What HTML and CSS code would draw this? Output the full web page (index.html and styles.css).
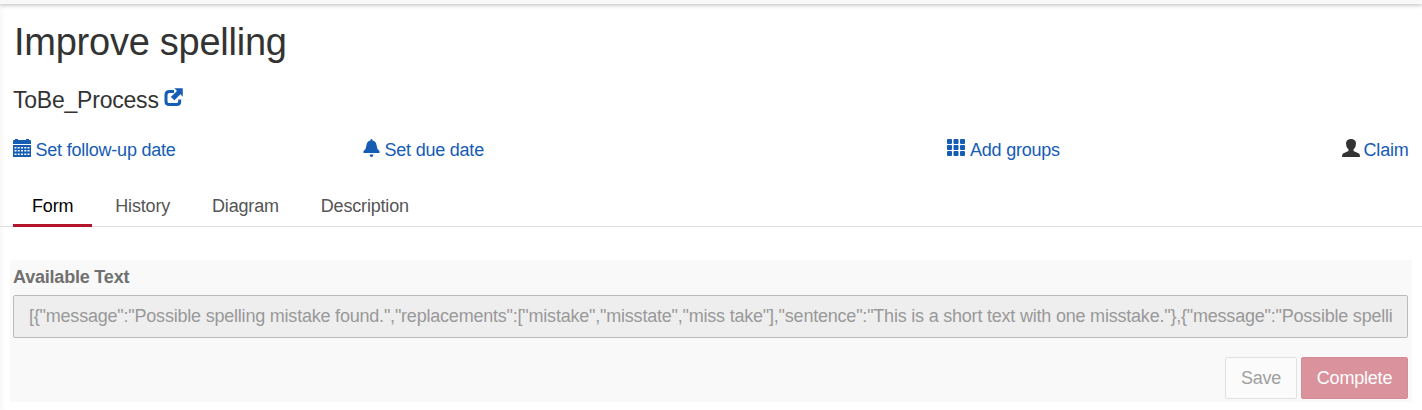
FILE: index.html
```html
<!DOCTYPE html>
<html lang="en">
<head>
<meta charset="utf-8">
<title>Improve spelling</title>
<link rel="stylesheet" href="styles.css">
</head>
<body>
<div class="topbar"></div>
<main class="task">
  <h1 class="title">Improve spelling</h1>
  <h2 class="process"><span>ToBe_Process</span><svg class="icon open-icon" width="20" height="20" viewBox="0 0 20 20"><path d="M10 3.500H5.500Q2 3.500 2 7V13.500Q2 16.500 5.500 16.500H12.500Q15.700 16.500 15.700 13.500V11.500" fill="none" stroke="#155cb5" stroke-width="3"/><path d="M10 0H19V9L16.300 6.500L10.500 12.500L6.500 9L12.700 3Z" fill="#155cb5" stroke="#fff" stroke-width=".5"/></svg></h2>
  <div class="meta">
    <a class="meta-item followup"><svg class="icon" width="18" height="18" viewBox="0 0 18 18"><path fill="#155cb5" fill-rule="evenodd" d="M0 2Q0 1 1 1H2V0H5V1H13V0H16V1H17Q18 1 18 2V5H0ZM0 6H18V18H0ZM1.500 8V9.500H3.500V8ZM4.700 8V9.500H6.700V8ZM8 8V9.500H10V8ZM11.300 8V9.500H13.300V8ZM14.500 8V9.500H16.500V8ZM1.500 11V12.500H3.500V11ZM4.700 11V12.500H6.700V11ZM8 11V12.500H10V11ZM11.300 11V12.500H13.300V11ZM14.500 11V12.500H16.500V11ZM1.500 14.500V16H3.500V14.500ZM4.700 14.500V16H6.700V14.500ZM8 14.500V16H10V14.500ZM11.300 14.500V16H13.300V14.500ZM14.500 14.500V16H16.500V14.500Z"/></svg><span>Set follow-up date</span></a>
    <a class="meta-item due"><svg class="icon" width="17" height="18" viewBox="0 0 17 18"><path fill="#155cb5" d="M7.500 1Q7.500 0 8.500 0T9.500 1V1.500Q13 2 13.500 6Q13.700 10 16.500 12V14H.5V12Q3.300 10 3.500 6Q4 2 7.500 1.500ZM6.500 15.500H10.500Q10 18 8.500 18T6.500 15.500Z"/></svg><span>Set due date</span></a>
    <a class="meta-item groups"><svg class="icon" width="18" height="18" viewBox="0 0 18 18"><g fill="#155cb5"><rect width="5" height="5" rx="1"/><rect x="6.500" width="5" height="5" rx="1"/><rect x="13" width="5" height="5" rx="1"/><rect y="6" width="5" height="5" rx="1"/><rect x="6.500" y="6" width="5" height="5" rx="1"/><rect x="13" y="6" width="5" height="5" rx="1"/><rect y="12" width="5" height="5" rx="1"/><rect x="6.500" y="12" width="5" height="5" rx="1"/><rect x="13" y="12" width="5" height="5" rx="1"/></g></svg><span>Add groups</span></a>
    <a class="meta-item claim"><svg class="icon" width="18" height="18" viewBox="0 0 18 18"><path fill="#333" d="M9 0C12 0 14 1.500 14 4.500Q14 8.500 11.500 10.500V12L17 14.500Q18 15.200 18 18H0Q0 15.200 1 14.500L6.500 12V10.500Q4 8.500 4 4.500C4 1.500 6 0 9 0Z"/></svg><span>Claim</span></a>
  </div>
  <nav class="tabs"><a class="tab active">Form</a><a class="tab">History</a><a class="tab">Diagram</a><a class="tab">Description</a></nav>
  <form class="form">
    <label class="label" for="text">Available Text</label>
    <input class="field" id="text" disabled value='[{"message":"Possible spelling mistake found.","replacements":["mistake","misstate","miss take"],"sentence":"This is a short text with one misstake."},{"message":"Possible spelling mistake found."}]'>
    <div class="actions"><button class="btn save" type="button" disabled>Save</button><button class="btn complete" type="button" disabled>Complete</button></div>
  </form>
</main>
</body>
</html>
```
FILE: styles.css
```css
* { box-sizing: border-box; }
body { margin: 0; height: 410px; overflow: hidden; background: linear-gradient(90deg, #f8f8f8, #fff 6px); color: #333; font: 18px/24px "Liberation Sans", Arial, sans-serif; }
.topbar { height: 4px; background: #f8f8f8; box-shadow: 0 1px 4px rgba(0,0,0,.3); }
.title { margin: 15px 0 0 14px; font-size: 38px; line-height: 46px; font-weight: 400; letter-spacing: -.25px; }
.process { display: flex; gap: 5px; margin: 21px 0 0 13px; font-size: 23px; line-height: 28px; font-weight: 400; letter-spacing: -.22px; }
.icon { display: block; flex: none; margin-top: 1px; }
.open-icon { margin-top: 2px; }
.meta { display: grid; grid-template-columns: 349.5px 584.5px 1fr auto; margin: 24px 13.5px 0 13px; height: 24px; letter-spacing: -.22px; color: #155cb5; }
.meta-item { display: flex; gap: 5px; white-space: nowrap; }
.followup { gap: 4.5px; }
.claim { gap: 4px; }
.tabs { display: flex; gap: 4px; height: 42px; margin-top: 23px; padding-left: 13px; border-bottom: 1px solid #ddd; letter-spacing: -.18px; }
.tab { padding: 9px 19px 0; height: 42px; color: #555; }
.tab.active { color: #000; border-bottom: 3px solid #b5152b; }
.form { margin: 33px 10px 0; padding: 5px 4px 0 3px; height: 142px; background: #f9f9f9; }
.label { display: block; font-size: 18px; font-weight: 700; letter-spacing: -.2px; color: #707070; }
.field { display: block; width: 100%; height: 43px; margin-top: 6px; padding: 0 15px; border: 1px solid #bbb; border-radius: 2px; background: #eee; color: #999; font: inherit; letter-spacing: -.21px; }
.actions { display: flex; justify-content: flex-end; gap: 4px; margin-top: 19px; }
.btn { height: 42px; padding: 0; border: 1px solid #e1e1e1; border-radius: 2px; background: #fbfbfb; color: #a0a0a0; font: inherit; letter-spacing: -.2px; }
.save { width: 72px; }
.complete { width: 107px; border-color: #d48b95; background: #da929c; color: #fff; }
```
